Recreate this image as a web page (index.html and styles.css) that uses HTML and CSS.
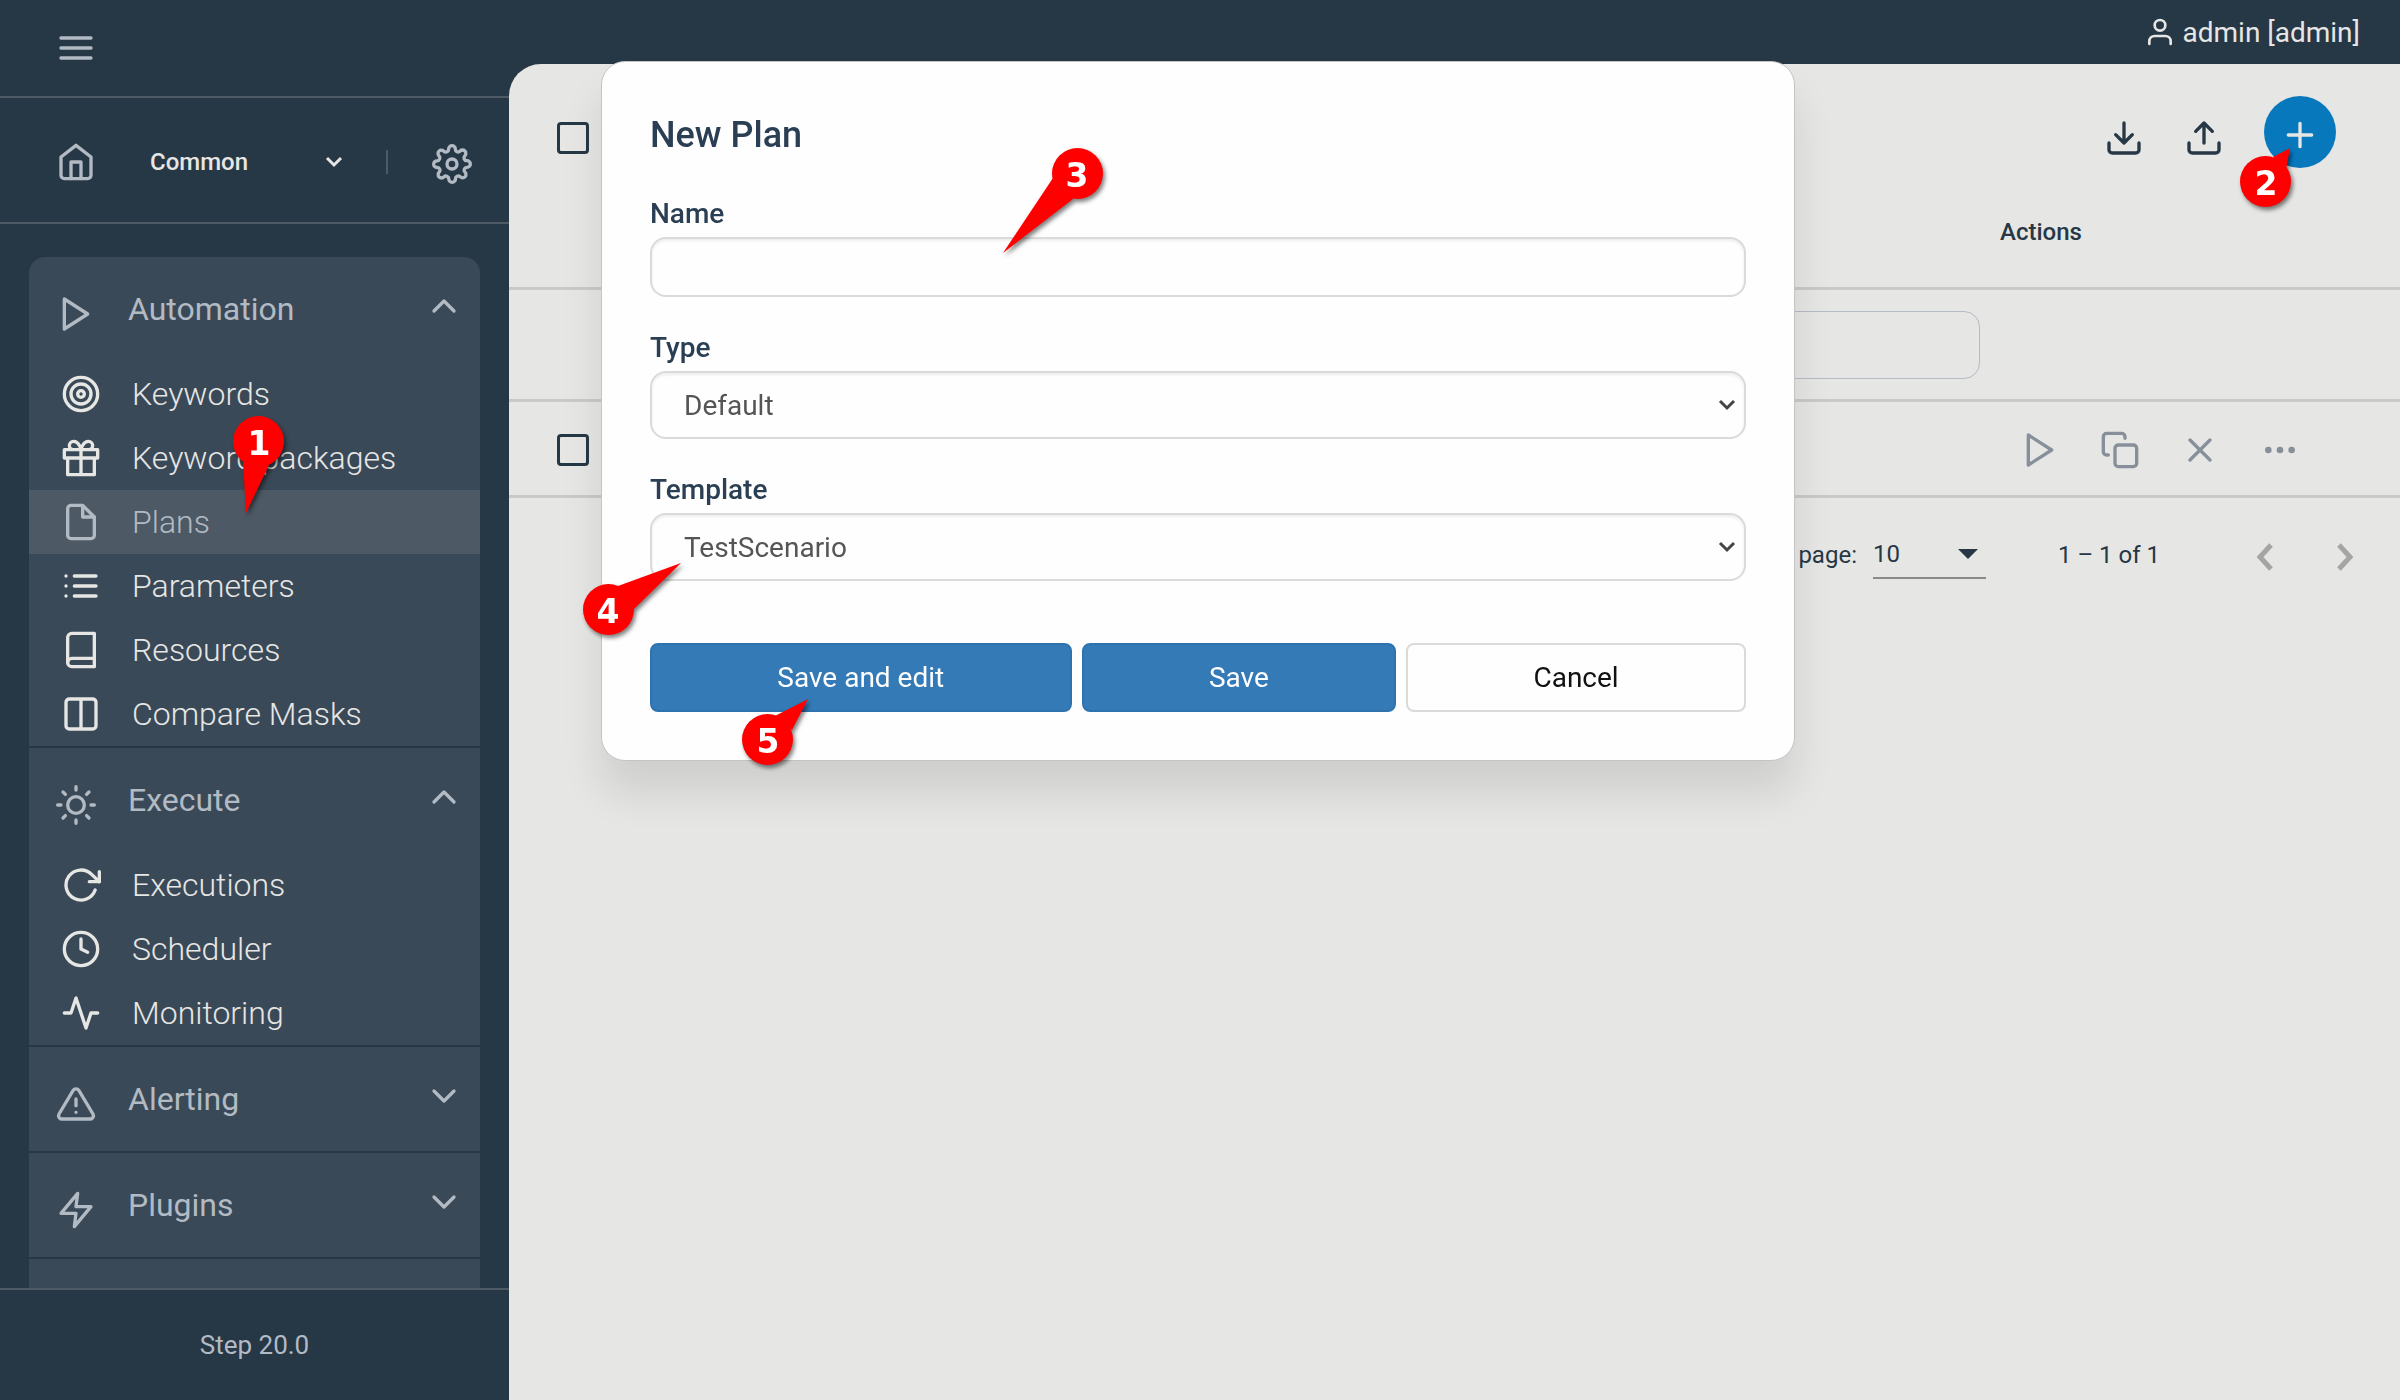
FILE: index.html
```html
<!DOCTYPE html>
<html lang="en">
<head>
<meta charset="utf-8">
<meta name="viewport" content="width=device-width, initial-scale=1">
<title>Step – Plans</title>
<link rel="stylesheet" href="styles.css">
</head>
<body>
<svg class="sprite" aria-hidden="true">
  <symbol id="menu" viewBox="0 0 24 24"><path d="M3 12h18M3 6h18M3 18h18"/></symbol>
  <symbol id="home" viewBox="0 0 24 24"><path d="M3 9l9-7 9 7v11a2 2 0 0 1-2 2H5a2 2 0 0 1-2-2z"/><path d="M9 22V12h6v10"/></symbol>
  <symbol id="settings" viewBox="0 0 24 24"><circle cx="12" cy="12" r="3"/><path d="M19.4 15a1.65 1.65 0 0 0 .33 1.82l.06.06a2 2 0 0 1 0 2.83 2 2 0 0 1-2.83 0l-.06-.06a1.65 1.65 0 0 0-1.82-.33 1.65 1.65 0 0 0-1 1.51V21a2 2 0 0 1-2 2 2 2 0 0 1-2-2v-.09A1.65 1.65 0 0 0 9 19.4a1.65 1.65 0 0 0-1.82.33l-.06.06a2 2 0 0 1-2.83 0 2 2 0 0 1 0-2.83l.06-.06a1.65 1.65 0 0 0 .33-1.82 1.65 1.65 0 0 0-1.51-1H3a2 2 0 0 1-2-2 2 2 0 0 1 2-2h.09A1.65 1.65 0 0 0 4.6 9a1.65 1.65 0 0 0-.33-1.82l-.06-.06a2 2 0 0 1 0-2.83 2 2 0 0 1 2.83 0l.06.06a1.65 1.65 0 0 0 1.82.33H9a1.65 1.65 0 0 0 1-1.51V3a2 2 0 0 1 2-2 2 2 0 0 1 2 2v.09a1.65 1.65 0 0 0 1 1.51 1.65 1.65 0 0 0 1.82-.33l.06-.06a2 2 0 0 1 2.83 0 2 2 0 0 1 0 2.83l-.06.06a1.65 1.65 0 0 0-.33 1.82V9a1.65 1.65 0 0 0 1.51 1H21a2 2 0 0 1 2 2 2 2 0 0 1-2 2h-.09a1.65 1.65 0 0 0-1.51 1z"/></symbol>
  <symbol id="play" viewBox="0 0 24 24"><path d="M5 3l14 9-14 9z"/></symbol>
  <symbol id="target" viewBox="0 0 24 24"><circle cx="12" cy="12" r="10"/><circle cx="12" cy="12" r="6"/><circle cx="12" cy="12" r="2"/></symbol>
  <symbol id="gift" viewBox="0 0 24 24"><path d="M20 12v10H4V12M2 7h20v5H2zM12 22V7M12 7H7.5a2.5 2.5 0 0 1 0-5C11 2 12 7 12 7zM12 7h4.500a2.500 2.500 0 0 0 0-5C13 2 12 7 12 7z"/></symbol>
  <symbol id="file" viewBox="0 0 24 24"><path d="M13 2H6a2 2 0 0 0-2 2v16a2 2 0 0 0 2 2h12a2 2 0 0 0 2-2V9z"/><path d="M13 2v7h7"/></symbol>
  <symbol id="list" viewBox="0 0 24 24"><path d="M8 6h13M8 12h13M8 18h13M3 6h.01M3 12h.01M3 18h.01"/></symbol>
  <symbol id="book" viewBox="0 0 24 24"><path d="M4 19.5A2.500 2.500 0 0 1 6.500 17H20"/><path d="M6.500 2H20v20H6.500A2.500 2.500 0 0 1 4 19.500v-15A2.500 2.500 0 0 1 6.500 2z"/></symbol>
  <symbol id="columns" viewBox="0 0 24 24"><path d="M12 3h7a2 2 0 0 1 2 2v14a2 2 0 0 1-2 2h-7m0-18H5a2 2 0 0 0-2 2v14a2 2 0 0 0 2 2h7m0-18v18"/></symbol>
  <symbol id="sun" viewBox="0 0 24 24"><circle cx="12" cy="12" r="5"/><path d="M12 1v2M12 21v2M4.220 4.220l1.420 1.420M18.360 18.360l1.420 1.420M1 12h2M21 12h2M4.220 19.780l1.420-1.420M18.360 5.640l1.420-1.420"/></symbol>
  <symbol id="rotate" viewBox="0 0 24 24"><path d="M23 4v6h-6"/><path d="M20.490 15a9 9 0 1 1-2.120-9.360L23 10"/></symbol>
  <symbol id="clock" viewBox="0 0 24 24"><circle cx="12" cy="12" r="10"/><path d="M12 6v6l4 2"/></symbol>
  <symbol id="activity" viewBox="0 0 24 24"><path d="M22 12h-4l-3 9L9 3l-3 9H2"/></symbol>
  <symbol id="alert" viewBox="0 0 24 24"><path d="M10.290 3.860L1.820 18a2 2 0 0 0 1.710 3h16.940a2 2 0 0 0 1.710-3L13.710 3.860a2 2 0 0 0-3.420 0zM12 9v4M12 17h.01"/></symbol>
  <symbol id="zap" viewBox="0 0 24 24"><path d="M13 2L3 14h9l-1 8 10-12h-9z"/></symbol>
  <symbol id="up" viewBox="0 0 24 24"><path d="M18 15l-6-6-6 6"/></symbol>
  <symbol id="down" viewBox="0 0 24 24"><path d="M6 9l6 6 6-6"/></symbol>
  <symbol id="user" viewBox="0 0 24 24"><path d="M20 21v-2a4 4 0 0 0-4-4H8a4 4 0 0 0-4 4v2"/><circle cx="12" cy="7" r="4"/></symbol>
  <symbol id="download" viewBox="0 0 24 24"><path d="M21 15v4a2 2 0 0 1-2 2H5a2 2 0 0 1-2-2v-4M7 10l5 5 5-5M12 15V3"/></symbol>
  <symbol id="upload" viewBox="0 0 24 24"><path d="M21 15v4a2 2 0 0 1-2 2H5a2 2 0 0 1-2-2v-4M17 8l-5-5-5 5M12 3v12"/></symbol>
  <symbol id="plus" viewBox="0 0 24 24"><path d="M12 5v14M5 12h14"/></symbol>
  <symbol id="copy" viewBox="0 0 24 24"><rect x="9" y="9" width="13" height="13" rx="2"/><path d="M5 15H4a2 2 0 0 1-2-2V4a2 2 0 0 1 2-2h9a2 2 0 0 1 2 2v1"/></symbol>
  <symbol id="close" viewBox="0 0 24 24"><path d="M18 6L6 18M6 6l12 12"/></symbol>
  <symbol id="more" viewBox="0 0 24 24"><circle cx="12" cy="12" r="1"/><circle cx="19" cy="12" r="1"/><circle cx="5" cy="12" r="1"/></symbol>
  <symbol id="caret" viewBox="0 0 18 12"><path d="M2 2l7 7 7-7"/></symbol>
</svg>

<div class="app">
  <aside class="sidebar">
    <div class="sidebar-top">
      <button class="icon-btn" type="button" aria-label="Toggle menu"><svg class="icon"><use href="#menu"/></svg></button>
    </div>
    <div class="project">
      <a class="icon-btn" href="#" aria-label="Home"><svg class="icon"><use href="#home"/></svg></a>
      <div class="project-select">
        <select aria-label="Project"><option>Common</option></select>
        <svg class="caret"><use href="#caret"/></svg>
      </div>
      <span class="project-divider"></span>
      <button class="icon-btn project-settings" type="button" aria-label="Settings"><svg class="icon"><use href="#settings"/></svg></button>
    </div>
    <nav class="nav">
      <div class="nav-card">
        <section class="nav-group">
          <button class="nav-head" type="button" aria-expanded="true"><svg class="icon nav-head-icon"><use href="#play"/></svg><span>Automation</span><svg class="icon nav-chevron"><use href="#up"/></svg></button>
          <ul class="nav-list">
            <li><a class="nav-link" href="#"><svg class="icon"><use href="#target"/></svg>Keywords</a></li>
            <li><a class="nav-link" href="#"><svg class="icon"><use href="#gift"/></svg>Keyword packages</a></li>
            <li class="nav-current"><a class="nav-link active" href="#" aria-current="page"><svg class="icon"><use href="#file"/></svg>Plans</a>
              <svg class="callout callout-plans" width="70" height="110" viewBox="0 0 70 110"><path d="M18 51L21 102 44 54z"/><circle cx="33.500" cy="30.500" r="25.500"/><text x="34" y="44">1</text></svg>
            </li>
            <li><a class="nav-link" href="#"><svg class="icon"><use href="#list"/></svg>Parameters</a></li>
            <li><a class="nav-link" href="#"><svg class="icon"><use href="#book"/></svg>Resources</a></li>
            <li><a class="nav-link" href="#"><svg class="icon"><use href="#columns"/></svg>Compare Masks</a></li>
          </ul>
        </section>
        <section class="nav-group">
          <button class="nav-head" type="button" aria-expanded="true"><svg class="icon nav-head-icon"><use href="#sun"/></svg><span>Execute</span><svg class="icon nav-chevron"><use href="#up"/></svg></button>
          <ul class="nav-list">
            <li><a class="nav-link" href="#"><svg class="icon"><use href="#rotate"/></svg>Executions</a></li>
            <li><a class="nav-link" href="#"><svg class="icon"><use href="#clock"/></svg>Scheduler</a></li>
            <li><a class="nav-link" href="#"><svg class="icon"><use href="#activity"/></svg>Monitoring</a></li>
          </ul>
        </section>
        <section class="nav-group">
          <button class="nav-head" type="button" aria-expanded="false"><svg class="icon nav-head-icon"><use href="#alert"/></svg><span>Alerting</span><svg class="icon nav-chevron"><use href="#down"/></svg></button>
        </section>
        <section class="nav-group">
          <button class="nav-head" type="button" aria-expanded="false"><svg class="icon nav-head-icon"><use href="#zap"/></svg><span>Plugins</span><svg class="icon nav-chevron"><use href="#down"/></svg></button>
        </section>
      </div>
    </nav>
    <footer class="sidebar-footer">Step 20.0</footer>
  </aside>

  <div class="content">
    <header class="topbar">
      <a class="user" href="#"><svg class="icon icon-small"><use href="#user"/></svg>admin [admin]</a>
    </header>
    <main class="page">
      <div class="toolbar">
        <input class="checkbox" type="checkbox" aria-label="Select all">
        <div class="toolbar-actions">
          <button class="icon-btn" type="button" aria-label="Import"><svg class="icon"><use href="#download"/></svg></button>
          <button class="icon-btn" type="button" aria-label="Export"><svg class="icon"><use href="#upload"/></svg></button>
          <div class="fab-wrap">
            <button class="fab" type="button" aria-label="New plan"><svg class="icon"><use href="#plus"/></svg></button>
            <svg class="callout callout-fab" width="70" height="80" viewBox="0 0 70 80"><path d="M43 17L60 8 56.500 27z"/><circle cx="35.500" cy="41.500" r="25.500"/><text x="36" y="55">2</text></svg>
          </div>
        </div>
      </div>
      <table class="plans">
        <thead>
          <tr class="row-head"><th class="col-check"></th><th></th><th class="col-actions">Actions</th></tr>
        </thead>
        <tbody>
          <tr class="row-filter"><td></td><td><input class="filter" type="text" aria-label="Filter"></td><td></td></tr>
          <tr class="row-plan">
            <td class="col-check"><input class="checkbox" type="checkbox" aria-label="Select plan"></td>
            <td></td>
            <td class="col-actions">
              <div class="row-actions">
                <button class="icon-btn" type="button" aria-label="Run"><svg class="icon"><use href="#play"/></svg></button>
                <button class="icon-btn" type="button" aria-label="Duplicate"><svg class="icon"><use href="#copy"/></svg></button>
                <button class="icon-btn" type="button" aria-label="Delete"><svg class="icon"><use href="#close"/></svg></button>
                <button class="icon-btn" type="button" aria-label="More"><svg class="icon"><use href="#more"/></svg></button>
              </div>
            </td>
          </tr>
        </tbody>
      </table>
      <div class="paginator">
        <label for="page-size">Items per page:</label>
        <div class="page-size">
          <select id="page-size"><option>10</option></select>
          <svg class="triangle" viewBox="0 0 20 10"><path d="M0 0h20L10 10z"/></svg>
        </div>
        <span class="range">1 – 1 of 1</span>
        <div class="pager">
          <button class="pager-btn" type="button" aria-label="Previous page"><svg viewBox="0 0 18 28"><path d="M15 2L4 14l11 12"/></svg></button>
          <button class="pager-btn" type="button" aria-label="Next page"><svg viewBox="0 0 18 28"><path d="M3 2l11 12L3 26"/></svg></button>
        </div>
      </div>
    </main>
  </div>
</div>

<div class="modal-layer">
  <form class="modal" role="dialog" aria-labelledby="modal-title">
    <h1 class="modal-title" id="modal-title">New Plan</h1>
    <div class="field">
      <label for="plan-name">Name</label>
      <input class="control control-text" id="plan-name" type="text">
      <svg class="callout callout-name" width="120" height="120" viewBox="0 0 120 120"><path d="M58 38L8 113 78 59z"/><circle cx="82.500" cy="33.500" r="25.500"/><text x="82" y="47">3</text></svg>
    </div>
    <div class="field">
      <label for="plan-type">Type</label>
      <div class="select-wrap">
        <select class="control" id="plan-type"><option>Default</option></select>
        <svg class="caret"><use href="#caret"/></svg>
      </div>
    </div>
    <div class="field">
      <label for="plan-template">Template</label>
      <div class="select-wrap">
        <select class="control" id="plan-template"><option>TestScenario</option></select>
        <svg class="caret"><use href="#caret"/></svg>
      </div>
      <svg class="callout callout-template" width="120" height="90" viewBox="0 0 120 90"><path d="M43 31L106 8 59 54z"/><circle cx="33.500" cy="54.500" r="25.500"/><text x="33" y="68">4</text></svg>
    </div>
    <div class="modal-actions">
      <button class="btn btn-primary" type="button">Save and edit</button>
      <button class="btn btn-primary" type="button">Save</button>
      <button class="btn" type="button">Cancel</button>
      <svg class="callout callout-save" width="85" height="85" viewBox="0 0 85 85"><path d="M40 26L73 9 57 40z"/><circle cx="32.500" cy="49.500" r="25.500"/><text x="33" y="63">5</text></svg>
    </div>
  </form>
</div>
</body>
</html>
```

FILE: styles.css
```css
:root {
  --navy: #263746;
  --card: #3a4957;
  --line: #4d5a66;
  --muted: #b2bac3;
  --light: #e6e6e4;
  --row-line: #c9c9c8;
}

* { box-sizing: border-box; }

body {
  margin: 0;
  background: var(--navy);
  color: var(--navy);
  font-family: Roboto, "Liberation Sans", sans-serif;
  font-size: 24px;
}

button, input, select { font: inherit; color: inherit; margin: 0; }
button { background: none; border: 0; padding: 0; cursor: pointer; }
a { color: inherit; text-decoration: none; }
ul { list-style: none; margin: 0; padding: 0; }
select { appearance: none; background: none; border: 0; border-radius: 0; padding: 0; }

.sprite { display: none; }

.icon {
  display: block;
  flex: none;
  width: 40px;
  height: 40px;
  fill: none;
  stroke: currentColor;
  stroke-width: 2;
  stroke-linecap: round;
  stroke-linejoin: round;
}
.icon-small { width: 32px; height: 32px; }
.icon-btn { display: block; flex: none; }

.caret {
  width: 18px;
  height: 12px;
  fill: none;
  stroke: currentColor;
  stroke-width: 3;
  pointer-events: none;
}

.app { display: flex; min-height: 100vh; }

/* Sidebar */
.sidebar {
  display: flex;
  flex-direction: column;
  flex: none;
  width: 509px;
  height: 100vh;
  color: var(--muted);
}
.sidebar-top {
  display: flex;
  align-items: center;
  height: 98px;
  padding-left: 56px;
  border-bottom: 2px solid var(--line);
}
.project {
  display: flex;
  align-items: center;
  height: 126px;
  padding: 4px 37px 0 56px;
  border-bottom: 2px solid var(--line);
}
.project-select {
  display: grid;
  align-items: center;
  flex: 1;
  margin-left: 54px;
  color: var(--light);
  font-weight: 500;
}
.project-select > * { grid-area: 1 / 1; }
.project-select .caret { justify-self: end; }
.project-divider {
  width: 2px;
  height: 24px;
  margin: 0 44px 0 43px;
  background: var(--line);
}
.project-settings { padding-top: 4px; }

.nav {
  flex: 1;
  min-height: 0;
  padding: 33px 29px 0;
  overflow: hidden;
}
.nav-card {
  min-height: 100%;
  background: var(--card);
  border-radius: 16px 16px 0 0;
}
.nav-group { border-bottom: 2px solid var(--navy); }
.nav-head {
  display: flex;
  align-items: center;
  gap: 32px;
  width: 100%;
  height: 104px;
  padding: 0 16px 0 27px;
  font-size: 32px;
}
.nav-head-icon { height: 50px; padding-top: 10px; }
.nav-chevron { height: 46px; margin-left: auto; padding-bottom: 6px; }
.nav-list { padding-top: 1px; font-size: 32px; font-weight: 300; color: var(--light); }
.nav-link {
  display: flex;
  align-items: center;
  gap: 31px;
  height: 64px;
  padding-left: 32px;
}
.nav-link.active { background: var(--line); color: var(--muted); }
.nav-current { position: relative; }

.sidebar-footer {
  display: flex;
  align-items: center;
  justify-content: center;
  height: 112px;
  border-top: 2px solid var(--line);
  font-size: 26px;
}

/* Content */
.content { display: flex; flex-direction: column; flex: 1; min-width: 0; }
.topbar {
  display: flex;
  align-items: center;
  justify-content: flex-end;
  height: 64px;
  padding-right: 40px;
  color: var(--light);
}
.user { display: flex; align-items: center; gap: 7px; font-size: 28px; }

.page { flex: 1; background: var(--light); border-top-left-radius: 32px; }

.toolbar {
  display: flex;
  align-items: center;
  justify-content: space-between;
  height: 110px;
  padding: 32px 64px 6px 48px;
}
.toolbar .checkbox { margin-top: 12px; }
.toolbar-actions { display: flex; align-items: center; gap: 40px; }
.toolbar-actions .icon-btn { padding-top: 12px; }
.fab-wrap { position: relative; }
.fab {
  display: flex;
  align-items: center;
  justify-content: center;
  width: 72px;
  height: 72px;
  padding-top: 6px;
  border-radius: 50%;
  background: #0878bd;
  color: var(--light);
}

.checkbox {
  appearance: none;
  display: block;
  width: 32px;
  height: 32px;
  border: 3px solid var(--navy);
  border-radius: 4px;
}

.plans { width: 100%; border-spacing: 0; table-layout: fixed; }
.plans th, .plans td {
  padding: 0;
  border-bottom: 3px solid var(--row-line);
  text-align: left;
  vertical-align: middle;
  font-weight: 500;
}
.plans th:first-child { width: 112px; }
.plans th:last-child { width: 420px; }
.plans .col-check { padding-left: 48px; }
.plans .col-actions { padding-left: 20px; }
.plans .row-head th { height: 116px; padding-top: 2px; }
.row-filter td { height: 112px; }
.plans .row-plan td { height: 96px; padding-top: 2px; }
.filter {
  display: block;
  width: 100%;
  height: 68px;
  padding: 0 32px;
  border: 1px solid #b4bbc6;
  border-radius: 16px;
  background: none;
}
.row-actions { display: flex; gap: 40px; padding-left: 20px; color: #87909a; }

.paginator {
  display: flex;
  align-items: center;
  justify-content: flex-end;
  height: 112px;
  padding: 2px 15px 0 0;
}
.page-size {
  display: grid;
  align-items: center;
  width: 113px;
  height: 48px;
  margin: 0 72px 0 16px;
  border-bottom: 2px solid #8a8b88;
}
.page-size > * { grid-area: 1 / 1; }
.triangle { justify-self: end; width: 20px; height: 10px; margin-right: 8px; fill: var(--navy); pointer-events: none; }
.pager { display: flex; margin-left: 65px; }
.pager-btn { display: flex; justify-content: center; width: 80px; padding-top: 4px; }
.pager-btn svg { width: 18px; height: 28px; fill: none; stroke: #a5a5a4; stroke-width: 5; }

/* Dialog */
.modal-layer {
  position: fixed;
  inset: 0;
  display: flex;
  align-items: flex-start;
  justify-content: center;
  padding: 61px 28px 24px 24px;
}
.modal {
  width: 100%;
  max-width: 1194px;
  padding: 33px 48px 48px;
  border: 1px solid #c4c4c4;
  border-radius: 24px;
  background: #fefefe;
  box-shadow: 0 32px 40px rgba(0, 0, 0, 0.1);
  color: #2a3f54;
  font-size: 28px;
}
.modal-title { margin: 0 0 18px; font-size: 36px; font-weight: 500; line-height: 80px; }
.field { position: relative; margin-bottom: 30px; }
.field label { display: block; margin-bottom: 2px; line-height: 42px; font-weight: 500; }
.control {
  display: block;
  width: 100%;
  height: 68px;
  padding: 0 32px;
  border: 2px solid #dadada;
  border-radius: 16px;
  background: #fefefe;
  box-shadow: inset 0 2px 3px rgba(0, 0, 0, 0.07);
  color: #555;
}
.control-text { height: 60px; }
.select-wrap { display: grid; align-items: center; color: #444; }
.select-wrap > * { grid-area: 1 / 1; }
.select-wrap .caret { justify-self: end; margin-right: 10px; }

.modal-actions { position: relative; display: flex; gap: 10px; margin-top: 62px; }
.btn {
  flex: 1 1 auto;
  height: 69px;
  border: 2px solid #dadada;
  border-radius: 8px;
  color: #111;
}
.btn-primary { background: #337ab7; border-color: #2f73ae; color: #fefefe; }

/* Numbered pointers */
.callout {
  position: absolute;
  z-index: 2;
  overflow: visible;
  fill: #f00;
  filter: drop-shadow(2px 3px 2px rgba(0, 0, 0, 0.5));
  pointer-events: none;
}
.callout text {
  fill: #fff;
  font-family: "DejaVu Sans", sans-serif;
  font-size: 33px;
  font-weight: 700;
  text-anchor: middle;
}
.callout-plans { left: 196px; top: -79px; }
.callout-fab { left: -34px; top: 44px; }
.callout-name { left: 345px; top: -53px; }
.callout-template { left: -75px; top: 86px; }
.callout-save { left: 85px; top: 47px; }
```
